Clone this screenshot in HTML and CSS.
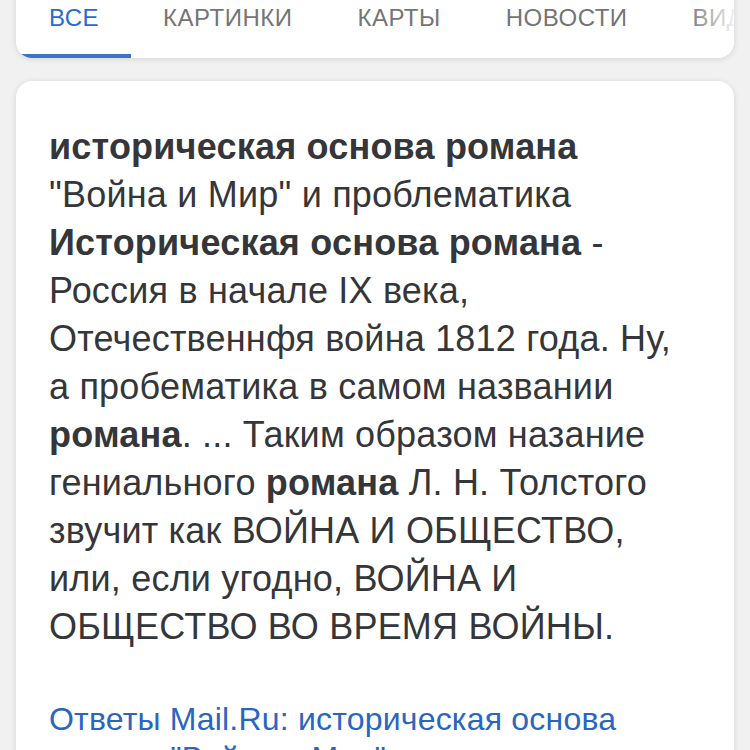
FILE: index.html
```html
<!DOCTYPE html>
<html lang="ru">
<head>
<meta charset="utf-8">
<title>Поиск</title>
<link rel="stylesheet" href="styles.css">
</head>
<body>
<div class="page">
  <nav class="tabs-card">
    <div class="tabs">
      <a class="tab active">ВСЕ</a>
      <a class="tab">КАРТИНКИ</a>
      <a class="tab">КАРТЫ</a>
      <a class="tab">НОВОСТИ</a>
      <a class="tab">ВИДЕО</a>
    </div>
    <div class="fade"></div>
  </nav>
  <section class="result-card">
    <p class="snippet"><b>историческая основа романа</b><br>"Война и Мир" и проблематика<br><b>Историческая основа романа</b> -<br>Россия в начале IX века,<br>Отечественнфя война 1812 года. Ну,<br>а пробематика в самом названии<br><b>романа</b>. ... Таким образом назание<br>гениального <b>романа</b> Л. Н. Толстого<br>звучит как ВОЙНА И ОБЩЕСТВО,<br>или, если угодно, ВОЙНА И<br>ОБЩЕСТВО ВО ВРЕМЯ ВОЙНЫ.</p>
    <a class="source">Ответы Mail.Ru: историческая основа<br>романа "Война и Мир" и ...</a>
  </section>
</div>
</body>
</html>
```
FILE: styles.css
```css
html, body {
  margin: 0;
  padding: 0;
  background: #f1f1f1;
}
body {
  font-family: "Liberation Sans", Arial, sans-serif;
  overflow: hidden;
}
.page {
  display: flex;
  flex-direction: column;
  gap: 23px;
  padding: 0 16px;
}
.tabs-card {
  position: relative;
  margin-top: -20px;
  height: 78px;
  background: #fff;
  border-radius: 0 0 16px 16px;
  box-shadow: 0 1px 6px rgba(0,0,0,0.12);
  overflow: hidden;
}
.tabs {
  display: flex;
  height: 100%;
  white-space: nowrap;
}
.tab {
  flex: none;
  box-sizing: border-box;
  height: 100%;
  padding: 24px 33px 0 33px;
  font-size: 24px;
  line-height: 28px;
  letter-spacing: 0.5px;
  color: #757575;
  text-decoration: none;
}
.tab.active {
  color: #2a6bcf;
  border-bottom: 4px solid #3a74c9;
  padding-right: 32px;
}
.tab + .tab {
  padding-left: 32px;
}
.fade {
  position: absolute;
  top: 0;
  right: 0;
  width: 46px;
  height: 100%;
  background: linear-gradient(to right, rgba(255,255,255,0), rgba(255,255,255,0.9));
}
.result-card {
  background: #fff;
  border-radius: 16px;
  box-shadow: 0 1px 6px rgba(0,0,0,0.12);
  padding: 42px 33px 40px 33px;
}
.snippet {
  margin: 0;
  font-size: 36px;
  line-height: 48px;
  letter-spacing: 0.2px;
  white-space: nowrap;
  color: #34363a;
}
.snippet b {
  font-weight: bold;
}
.source {
  display: block;
  margin-top: 49px;
  font-size: 32px;
  line-height: 39px;
  letter-spacing: 0.2px;
  white-space: nowrap;
  color: #2a66c0;
  text-decoration: none;
}
```
